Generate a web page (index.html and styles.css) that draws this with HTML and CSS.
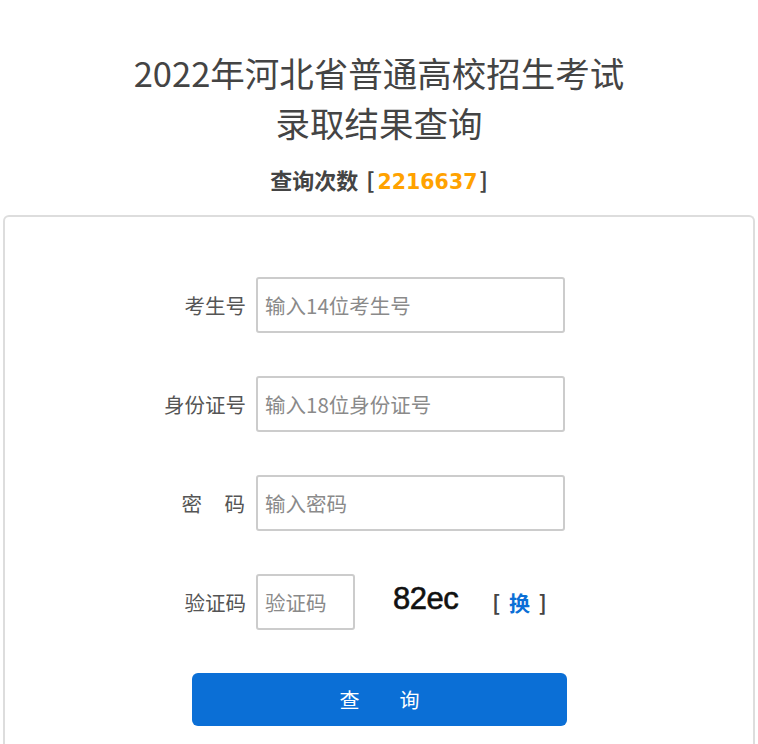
FILE: index.html
```html
<!DOCTYPE html>
<html lang="zh-CN">
<head>
<meta charset="utf-8">
<title>2022年河北省普通高校招生考试录取结果查询</title>
<link rel="stylesheet" href="styles.css">
</head>
<body>
<header class="head">
  <h1 class="title"><span class="l1">2022年河北省普通高校招生考试</span><span class="l2">录取结果查询</span></h1>
  <p class="count">查询次数 [<span class="num">2216637</span>]</p>
</header>
<main class="card">
  <form class="form">
    <label class="lbl" for="ksh">考生号</label>
    <input class="inp" id="ksh" type="text" placeholder="输入14位考生号">
    <label class="lbl" for="sfz">身份证号</label>
    <input class="inp" id="sfz" type="text" placeholder="输入18位身份证号">
    <label class="lbl lbl-pw" for="mm">密　码</label>
    <input class="inp" id="mm" type="password" placeholder="输入密码">
    <label class="lbl" for="yzm">验证码</label>
    <div class="code-row">
      <input class="inp inp-code" id="yzm" type="text" placeholder="验证码">
      <span class="captcha">82ec</span>
      <span class="swap">[ <a class="swap-link" href="#">换</a> ]</span>
    </div>
  </form>
  <button class="btn" type="button">查　　询</button>
</main>
</body>
</html>
```
FILE: styles.css
```css
html, body {
  margin: 0;
  padding: 0;
  background: #fff;
}
body {
  font-family: "Noto Sans CJK SC", "Noto Sans", sans-serif;
  color: #444;
}
.head {
  text-align: center;
  padding-top: 47px;
}
.title {
  margin: 0;
  font-weight: normal;
  font-size: 34.5px;
  line-height: 50px;
  color: #444;
}
.title .l1, .title .l2 {
  display: block;
}
.count {
  margin: 17px 0 0;
  font-size: 22px;
  line-height: 30px;
  font-weight: bold;
  color: #444;
  word-spacing: 3px;
}
.count .num {
  font-family: "DejaVu Sans", sans-serif;
  font-size: 20.5px;
  color: #ffa200;
  margin: 0 2px 0 3px;
}
.card {
  margin: 18px 3px 0;
  border: 2px solid #dddddd;
  border-bottom: none;
  border-radius: 6px 6px 0 0;
  padding: 60px 0 40px;
  height: 600px;
  box-sizing: border-box;
}
.form {
  display: grid;
  grid-template-columns: 100px 309px;
  column-gap: 10px;
  row-gap: 43px;
  margin-left: 141px;
  align-items: center;
}
.lbl {
  text-align: right;
  font-size: 20.5px;
  color: #555;
  white-space: pre;
}
.lbl-pw {
  letter-spacing: 1px;
}
.inp {
  box-sizing: border-box;
  width: 309px;
  height: 56px;
  border: 2px solid #cccccc;
  border-radius: 3px;
  padding: 0 7px;
  font-family: "Noto Sans CJK SC", "Noto Sans", sans-serif;
  font-size: 20.5px;
  color: #333;
  outline: none;
}
.inp::placeholder {
  color: #8a8a8a;
}
.code-row {
  display: flex;
  align-items: center;
}
.inp-code {
  width: 99px;
}
.captcha {
  margin-left: 38px;
  font-family: "Liberation Sans", Arial, sans-serif;
  font-size: 31px;
  color: #111;
  -webkit-text-stroke: 0.6px #111;
  letter-spacing: -0.5px;
  margin-top: -6px;
}
.swap {
  margin-left: 34px;
  font-size: 21px;
  font-weight: bold;
  color: #444;
  word-spacing: 4px;
}
.swap-link {
  color: #0b6fd6;
  text-decoration: none;
}
.btn {
  display: block;
  margin: 43px 0 0 187px;
  width: 375px;
  height: 53px;
  border: none;
  border-radius: 6px;
  background: #0b6fd6;
  color: #fff;
  font-family: "Noto Sans CJK SC", "Noto Sans", sans-serif;
  font-size: 20px;
  cursor: pointer;
}
```
